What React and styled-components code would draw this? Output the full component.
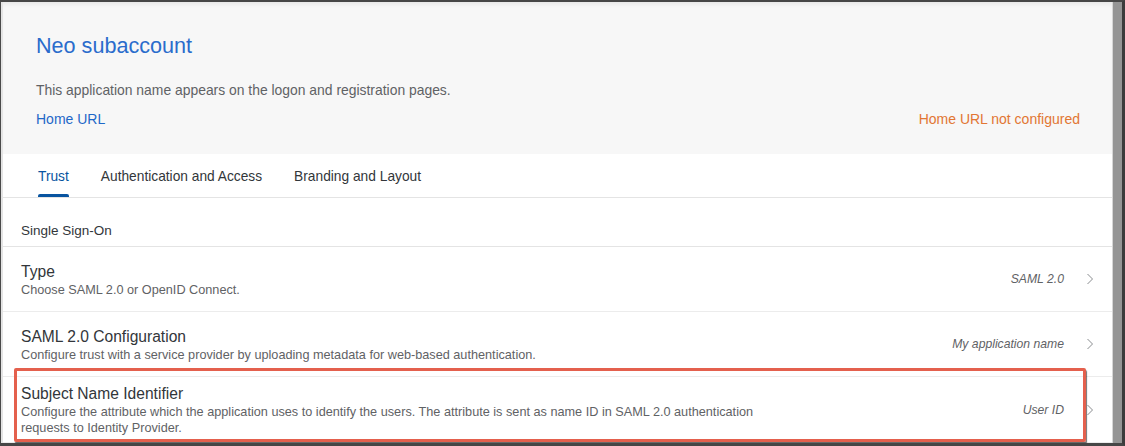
import React from "react";
import styled, { createGlobalStyle } from "styled-components";

const Global = createGlobalStyle`
  html, body { margin: 0; padding: 0; background: #ffffff; }
  body { font-family: "Liberation Sans", Arial, sans-serif; }
  * { box-sizing: border-box; }
`;

const Frame = styled.div`
  width: 1125px;
  height: 446px;
  display: flex;
  border-top: 2px solid #474747;
  border-left: 1px solid #4a4a4a;
  border-right: 3px solid #3c3c3c;
  border-bottom: 3px solid #464646;
  overflow: hidden;
  background: #ffffff;
`;

const Main = styled.div`
  flex: 1;
  display: flex;
  flex-direction: column;
  border-left: 2px solid #e4e4e4;
  min-width: 0;
`;

const Scrollbar = styled.div`
  width: 10px;
  background: #959595;
  border-left: 1px solid #d6d6d6;
`;

const Header = styled.header`
  background: #f7f7f7;
  padding: 31px 32px 25px 33px;
  box-shadow: inset 0 5px 5px -3px rgba(0, 0, 0, 0.07);
`;

const Title = styled.h1`
  margin: 0;
  font-size: 21.6px;
  line-height: 26px;
  font-weight: 400;
  color: #2a6ccc;
`;

const Description = styled.p`
  margin: 21px 0 0;
  font-size: 13.9px;
  line-height: 20px;
  color: #5f6265;
`;

const UrlRow = styled.div`
  margin-top: 9px;
  display: flex;
  justify-content: space-between;
  align-items: center;
  font-size: 14px;
  line-height: 20px;
`;

const Link = styled.a`
  color: ${(p) => (p.$warn ? "#e27633" : "#1f68c8")};
  text-decoration: none;
`;

const TabBar = styled.nav`
  display: flex;
  gap: 32px;
  padding-left: 35px;
  height: 44px;
  border-bottom: 1px solid #e4e4e4;
`;

const Tab = styled.div`
  position: relative;
  display: flex;
  align-items: center;
  padding-top: 2px;
  font-size: 13.75px;
  color: ${(p) => (p.$active ? "#0854a0" : "#32363a")};
  &::after {
    content: "";
    display: ${(p) => (p.$active ? "block" : "none")};
    position: absolute;
    left: 0;
    right: 0;
    bottom: 0;
    height: 3px;
    border-radius: 2px 2px 0 0;
    background: #0854a0;
  }
`;

const SectionHeader = styled.div`
  padding: 23px 18px 5px;
  font-size: 13.5px;
  line-height: 20px;
  color: #32363a;
  border-bottom: 1px solid #e4e4e4;
`;

const Row = styled.div`
  position: relative;
  display: flex;
  align-items: center;
  min-height: 65px;
  padding: 6px 18px 6px 18px;
  border-bottom: 1px solid #ececec;
`;

const RowText = styled.div`
  flex: 1;
  min-width: 0;
  padding-top: 1px;
`;

const RowTitle = styled.div`
  font-size: 15.6px;
  line-height: 20px;
  color: #32363a;
`;

const RowDesc = styled.div`
  font-size: 12.7px;
  line-height: 16px;
  color: #5f6265;
  max-width: 765px;
`;

const RowValue = styled.div`
  font-size: 12.2px;
  font-style: italic;
  color: #5f6265;
  margin-left: 20px;
`;

const Chevron = styled.svg`
  width: 8px;
  height: 12px;
  margin-left: 22px;
  flex: none;
`;

const Highlight = styled.div`
  position: absolute;
  left: 11px;
  top: -9px;
  width: 1072px;
  height: 74px;
  border: 3px solid #e4604d;
  border-radius: 2px;
  box-shadow: 1px 2px 1px rgba(0, 0, 0, 0.55);
  pointer-events: none;
`;

const rows = [
  {
    title: "Type",
    desc: "Choose SAML 2.0 or OpenID Connect.",
    value: "SAML 2.0",
  },
  {
    title: "SAML 2.0 Configuration",
    desc: "Configure trust with a service provider by uploading metadata for web-based authentication.",
    value: "My application name",
  },
  {
    title: "Subject Name Identifier",
    desc: "Configure the attribute which the application uses to identify the users. The attribute is sent as name ID in SAML 2.0 authentication requests to Identity Provider.",
    value: "User ID",
    highlight: true,
  },
];

export default function App() {
  return (
    <>
      <Global />
      <Frame>
        <Main>
          <Header>
            <Title>Neo subaccount</Title>
            <Description>
              This application name appears on the logon and registration pages.
            </Description>
            <UrlRow>
              <Link>Home URL</Link>
              <Link $warn>Home URL not configured</Link>
            </UrlRow>
          </Header>
          <TabBar>
            <Tab $active>Trust</Tab>
            <Tab>Authentication and Access</Tab>
            <Tab>Branding and Layout</Tab>
          </TabBar>
          <SectionHeader>Single Sign-On</SectionHeader>
          {rows.map((r) => (
            <Row key={r.title}>
              <RowText>
                <RowTitle>{r.title}</RowTitle>
                <RowDesc>{r.desc}</RowDesc>
              </RowText>
              <RowValue>{r.value}</RowValue>
              <Chevron viewBox="0 0 8 12">
                <path d="M1.5 1 L6.5 6 L1.5 11" fill="none" stroke="#8a8d90" strokeWidth="1" />
              </Chevron>
              {r.highlight && <Highlight />}
            </Row>
          ))}
        </Main>
        <Scrollbar />
      </Frame>
    </>
  );
}
